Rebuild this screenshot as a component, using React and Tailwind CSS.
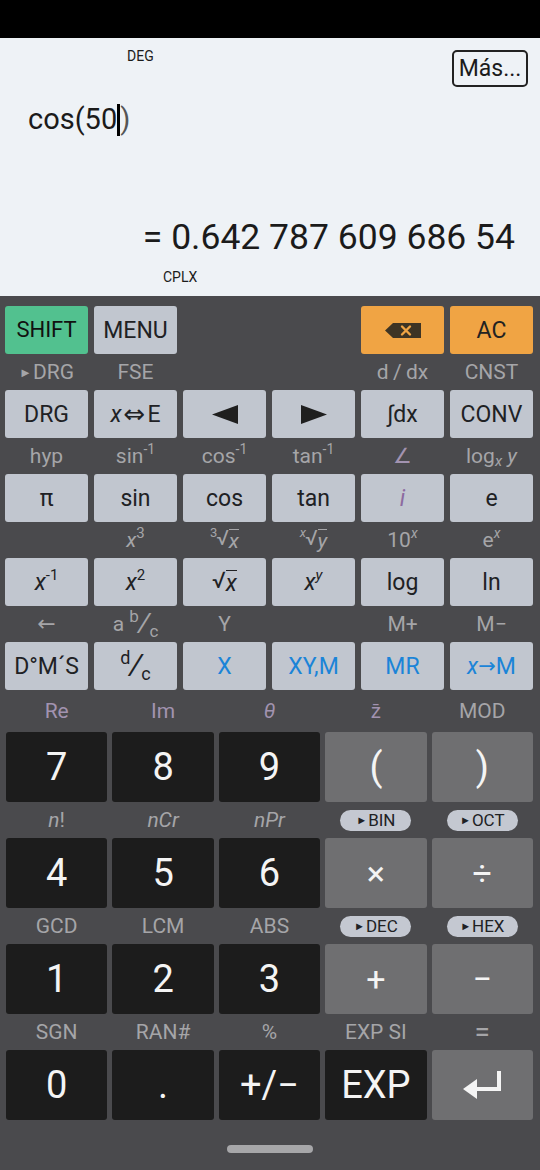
import React from 'react';

const TONES = {
  light: 'bg-[#c1c6cf] h-[48px] text-[23px]',
  green: 'bg-[#52c18f] h-[48px] text-[22px]',
  orange: 'bg-[#f0a444] h-[48px] text-[23px]',
  dark: 'bg-[#1c1c1c] h-[70px] text-[38px]',
  gray: 'bg-[#6f6f71] h-[70px] text-[38px]',
};

const INK = {
  light: 'text-[#202124]',
  green: 'text-[#111]',
  orange: 'text-[#222]',
  dark: 'text-[#f4f4f4]',
  gray: 'text-[#f4f4f4]',
};

const Key = ({ tone = 'light', ink, className = '', children }) => (
  <div className={`flex items-center justify-center rounded-[3px] leading-none ${TONES[tone]} ${ink || INK[tone]} ${className}`}>
    {children}
  </div>
);

const Lbl = ({ ink = 'text-[#a5a5a8]', size = 'text-[21px]', className = '', children }) => (
  <div className={`flex items-center justify-center leading-none ${size} ${ink} ${className}`}>
    {children}
  </div>
);

const Pill = ({ children }) => (
  <div className="flex items-center justify-center">
    <div className="flex items-center justify-center w-[71px] h-[21px] rounded-full bg-[#c4c8d1] text-[#202124] text-[17px] leading-none">
      <span className="text-[11px] mr-[1px]">►</span>
      {children}
    </div>
  </div>
);

const Root = ({ idx, children }) => (
  <span className="inline-flex items-start leading-none">
    {idx && <span className="text-[0.62em] mt-[-2px] mr-[-1px]">{idx}</span>}
    <span>√</span>
    <span className="border-t-[1.5px] border-current pt-[1px] mt-[1px] italic">{children}</span>
  </span>
);

// stacked little fraction: sup / slash / c
const Frac = ({ top, size }) => (
  <span className="inline-flex items-center leading-none">
    <span className={`${size} self-start -mt-[2px]`}>{top}</span>
    <span className="text-[1.3em] font-['DejaVu_Sans'] mx-[3px]">⁄</span>
    <span className={`${size} self-end mb-[-2px]`}>c</span>
  </span>
);

const Tri = ({ dir }) => (
  <svg width="26" height="19" viewBox="0 0 26 19">
    <polygon points={dir === 'left' ? '0,9.5 26,0 26,19' : '26,9.5 0,0 0,19'} fill="#1f1f1f" />
  </svg>
);

const Backspace = () => (
  <svg width="36" height="15" viewBox="0 0 36 15">
    <polygon points="0,7.5 8,0 36,0 36,15 8,15" fill="#3e3424" />
    <path d="M17 3.5 L25 11.5 M25 3.5 L17 11.5" stroke="#f0a444" strokeWidth="2.4" strokeLinecap="round" />
  </svg>
);

const Enter = () => (
  <svg width="40" height="30" viewBox="0 0 40 30">
    <path d="M37 1 V19 H12" stroke="#f4f4f4" strokeWidth="4" fill="none" />
    <polygon points="1,19 15,9 15,29" fill="#f4f4f4" />
  </svg>
);

const Row6 = ({ className = '', children }) => (
  <div className={`grid grid-cols-6 gap-x-[6px] pl-[5px] pr-[7px] ${className}`}>{children}</div>
);

const Row5 = ({ className = '', children }) => (
  <div className={`grid grid-cols-5 gap-x-[5px] pl-[6px] pr-[7px] ${className}`}>{children}</div>
);

const blue = 'text-[#1b84d8]';
const purple = 'text-[#a293b0]';

export default function App() {
  return (
    <div className="w-[540px] h-[1170px] overflow-hidden flex flex-col font-[Roboto,sans-serif]">
      <div className="h-[38px] bg-black" />

      {/* Display */}
      <div className="h-[258px] bg-[#eef2f6] px-[12px] flex flex-col text-[#1b1b1b]">
        <div className="flex justify-between items-start pt-[12px]">
          <div className="ml-[115px] -mt-[2px] text-[14px] leading-[16px]">DEG</div>
          <div className="w-[76px] h-[37px] border-2 border-[#222] rounded-[5px] flex items-center justify-center text-[23px] leading-none">
            Más...
          </div>
        </div>
        <div className="mt-[14px] ml-[16px] text-[29px] leading-[34px] flex items-center">
          <span>cos(50</span>
          <span className="inline-block w-[3px] h-[32px] mt-[3px] bg-black" />
          <span className="text-[#555]">)</span>
        </div>
        <div className="mt-[80px] mr-[13px] text-right text-[35.5px] leading-[42px]">= 0.642 787 609 686 54</div>
        <div className="mt-[11px] ml-[151px] text-[14px] leading-[16px]">CPLX</div>
      </div>

      {/* Keypad */}
      <div className="flex-1 bg-[#4a4a4d] pt-[10px] flex flex-col">
        <Row6>
          <Key tone="green">SHIFT</Key>
          <Key>MENU</Key>
          <div />
          <div />
          <Key tone="orange"><Backspace /></Key>
          <Key tone="orange">AC</Key>
        </Row6>
        <Row6 className="h-[36px]">
          <Lbl><span className="text-[13px] mr-[1px]">►</span>DRG</Lbl>
          <Lbl>FSE</Lbl>
          <div />
          <div />
          <Lbl>d&thinsp;/&thinsp;dx</Lbl>
          <Lbl>CNST</Lbl>
        </Row6>
        <Row6>
          <Key>DRG</Key>
          <Key><span className="italic">x</span><span className="mx-[2px] text-[26px] font-['DejaVu_Sans']">⇔</span>E</Key>
          <Key><Tri dir="left" /></Key>
          <Key><Tri dir="right" /></Key>
          <Key>∫dx</Key>
          <Key>CONV</Key>
        </Row6>
        <Row6 className="h-[36px]">
          <Lbl>hyp</Lbl>
          <Lbl>sin<sup className="text-[14px]">-1</sup></Lbl>
          <Lbl>cos<sup className="text-[14px]">-1</sup></Lbl>
          <Lbl>tan<sup className="text-[14px]">-1</sup></Lbl>
          <Lbl ink={purple}>∠</Lbl>
          <Lbl>log<sub className="italic text-[15px] bottom-[-0.3em]">x</sub>&nbsp;<span className="italic">y</span></Lbl>
        </Row6>
        <Row6>
          <Key>π</Key>
          <Key>sin</Key>
          <Key>cos</Key>
          <Key>tan</Key>
          <Key ink="text-[#8c6aa0]" className="italic">i</Key>
          <Key>e</Key>
        </Row6>
        <Row6 className="h-[36px]">
          <div />
          <Lbl><span className="italic">x</span><sup className="text-[15px]">3</sup></Lbl>
          <Lbl><Root idx="3">x</Root></Lbl>
          <Lbl><Root idx={<span className="italic">x</span>}>y</Root></Lbl>
          <Lbl>10<sup className="italic text-[14px]">x</sup></Lbl>
          <Lbl>e<sup className="italic text-[14px]">x</sup></Lbl>
        </Row6>
        <Row6>
          <Key><span className="italic">x</span><sup className="text-[15px]">-1</sup></Key>
          <Key><span className="italic">x</span><sup className="text-[15px]">2</sup></Key>
          <Key><Root>x</Root></Key>
          <Key><span className="italic">x</span><sup className="italic text-[15px]">y</sup></Key>
          <Key>log</Key>
          <Key>ln</Key>
        </Row6>
        <Row6 className="h-[36px]">
          <Lbl size="text-[22px]" className="font-['DejaVu_Sans']">←</Lbl>
          <Lbl>a&nbsp;<Frac top="b" size="text-[17px]" /></Lbl>
          <Lbl>Y</Lbl>
          <div />
          <Lbl>M+</Lbl>
          <Lbl>M−</Lbl>
        </Row6>
        <Row6>
          <Key>D°M´S</Key>
          <Key><Frac top="d" size="text-[18px]" /></Key>
          <Key ink={blue}>X</Key>
          <Key ink={blue}>XY,M</Key>
          <Key ink={blue}>MR</Key>
          <Key ink={blue}><span className="italic">x</span><span className="text-[21px] font-['DejaVu_Sans']">→</span>M</Key>
        </Row6>

        <Row5 className="h-[42px]">
          <Lbl ink={purple}>Re</Lbl>
          <Lbl ink={purple}>Im</Lbl>
          <Lbl ink={purple} className="italic">θ</Lbl>
          <Lbl ink={purple}>z̄</Lbl>
          <Lbl>MOD</Lbl>
        </Row5>
        <Row5>
          <Key tone="dark">7</Key>
          <Key tone="dark">8</Key>
          <Key tone="dark">9</Key>
          <Key tone="gray">(</Key>
          <Key tone="gray">)</Key>
        </Row5>
        <Row5 className="h-[36px]">
          <Lbl><span className="italic">n</span>!</Lbl>
          <Lbl className="italic">nCr</Lbl>
          <Lbl className="italic">nPr</Lbl>
          <Pill>BIN</Pill>
          <Pill>OCT</Pill>
        </Row5>
        <Row5>
          <Key tone="dark">4</Key>
          <Key tone="dark">5</Key>
          <Key tone="dark">6</Key>
          <Key tone="gray" className="!text-[34px]">×</Key>
          <Key tone="gray" className="!text-[34px]">÷</Key>
        </Row5>
        <Row5 className="h-[36px]">
          <Lbl>GCD</Lbl>
          <Lbl>LCM</Lbl>
          <Lbl>ABS</Lbl>
          <Pill>DEC</Pill>
          <Pill>HEX</Pill>
        </Row5>
        <Row5>
          <Key tone="dark">1</Key>
          <Key tone="dark">2</Key>
          <Key tone="dark">3</Key>
          <Key tone="gray" className="!text-[34px]">+</Key>
          <Key tone="gray" className="!text-[34px]">−</Key>
        </Row5>
        <Row5 className="h-[36px]">
          <Lbl>SGN</Lbl>
          <Lbl>RAN#</Lbl>
          <Lbl>%</Lbl>
          <Lbl>EXP SI</Lbl>
          <Lbl size="text-[28px]">=</Lbl>
        </Row5>
        <Row5>
          <Key tone="dark">0</Key>
          <Key tone="dark">.</Key>
          <Key tone="dark">+/−</Key>
          <Key tone="dark">EXP</Key>
          <Key tone="gray"><Enter /></Key>
        </Row5>

        <div className="mt-[25px] mx-auto w-[86px] h-[8px] rounded-full bg-[#a7a7a9]" />
      </div>
    </div>
  );
}
